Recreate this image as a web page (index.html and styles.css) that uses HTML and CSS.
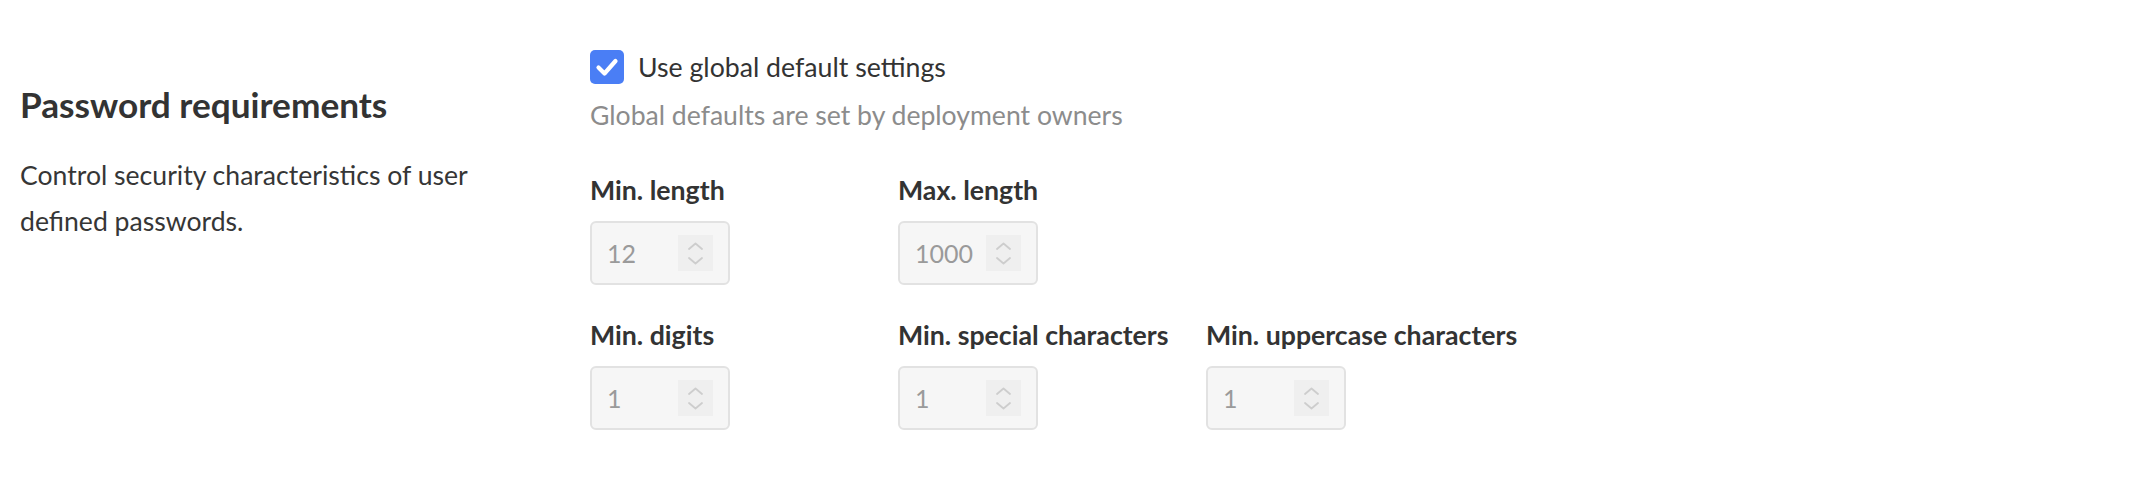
FILE: index.html
```html
<!DOCTYPE html>
<html lang="en">
<head>
<meta charset="utf-8">
<title>Password requirements</title>
<link rel="stylesheet" href="styles.css">
</head>
<body>
<section class="settings-section">
  <div class="section-info">
    <h2 class="section-title">Password requirements</h2>
    <p class="section-desc">Control security characteristics of user defined passwords.</p>
  </div>
  <div class="section-body">
    <label class="check-row">
      <span class="checkbox">
        <svg width="34" height="34" viewBox="0 0 34 34"><path d="M8.5 17.5 L14.5 23.5 L25.5 11" fill="none" stroke="#fff" stroke-width="4.2" stroke-linecap="round" stroke-linejoin="round"/></svg>
      </span>
      <span class="check-label">Use global default settings</span>
    </label>
    <p class="hint">Global defaults are set by deployment owners</p>
    <div class="fields">
      <div class="field">
        <div class="field-label">Min. length</div>
        <div class="num-input"><span class="num-value">12</span><span class="spinner"><svg width="35" height="36" viewBox="0 0 35 36"><path d="M11 14 L17.5 8.5 L24 14 M11 23 L17.5 28.5 L24 23" fill="none" stroke="#cdcdcd" stroke-width="1.8" stroke-linecap="round" stroke-linejoin="round"/></svg></span></div>
      </div>
      <div class="field">
        <div class="field-label">Max. length</div>
        <div class="num-input"><span class="num-value">1000</span><span class="spinner"><svg width="35" height="36" viewBox="0 0 35 36"><path d="M11 14 L17.5 8.5 L24 14 M11 23 L17.5 28.5 L24 23" fill="none" stroke="#cdcdcd" stroke-width="1.8" stroke-linecap="round" stroke-linejoin="round"/></svg></span></div>
      </div>
      <div class="field field-break">
        <div class="field-label">Min. digits</div>
        <div class="num-input"><span class="num-value">1</span><span class="spinner"><svg width="35" height="36" viewBox="0 0 35 36"><path d="M11 14 L17.5 8.5 L24 14 M11 23 L17.5 28.5 L24 23" fill="none" stroke="#cdcdcd" stroke-width="1.8" stroke-linecap="round" stroke-linejoin="round"/></svg></span></div>
      </div>
      <div class="field">
        <div class="field-label">Min. special characters</div>
        <div class="num-input"><span class="num-value">1</span><span class="spinner"><svg width="35" height="36" viewBox="0 0 35 36"><path d="M11 14 L17.5 8.5 L24 14 M11 23 L17.5 28.5 L24 23" fill="none" stroke="#cdcdcd" stroke-width="1.8" stroke-linecap="round" stroke-linejoin="round"/></svg></span></div>
      </div>
      <div class="field">
        <div class="field-label">Min. uppercase characters</div>
        <div class="num-input"><span class="num-value">1</span><span class="spinner"><svg width="35" height="36" viewBox="0 0 35 36"><path d="M11 14 L17.5 8.5 L24 14 M11 23 L17.5 28.5 L24 23" fill="none" stroke="#cdcdcd" stroke-width="1.8" stroke-linecap="round" stroke-linejoin="round"/></svg></span></div>
      </div>
    </div>
  </div>
</section>
</body>
</html>
```
FILE: styles.css
```css
html, body {
  margin: 0;
  padding: 0;
  background: #ffffff;
}

body {
  font-family: Lato, "Noto Sans", sans-serif;
  color: #333333;
}

.settings-section {
  display: flex;
  padding: 50px 0 0 20px;
}

.section-info {
  width: 570px;
  flex: none;
}

.section-title {
  margin: 36px 0 0 0;
  font-size: 35.2px;
  line-height: 36px;
  font-weight: 700;
  color: #333333;
}

.section-desc {
  margin: 30px 0 0 0;
  width: 500px;
  font-size: 26.6px;
  line-height: 46px;
  color: #363636;
}

.section-body {
  display: flex;
  flex-direction: column;
}

.check-row {
  display: flex;
  align-items: center;
  gap: 14px;
  height: 34px;
}

.checkbox {
  width: 34px;
  height: 34px;
  border-radius: 5px;
  background: #4a7ef5;
  display: flex;
}

.check-label {
  font-size: 26.7px;
  line-height: 30px;
  color: #333333;
}

.hint {
  margin: 16px 0 0 0;
  font-size: 26.6px;
  line-height: 30px;
  color: #8c8c8c;
}

.fields {
  display: grid;
  grid-template-columns: 308px 308px auto;
  row-gap: 35px;
  margin-top: 45px;
}

.field-break {
  grid-column: 1;
}

.field-label {
  font-size: 26.7px;
  line-height: 30px;
  font-weight: 700;
  color: #333333;
  white-space: nowrap;
}

.num-input {
  margin-top: 16px;
  box-sizing: border-box;
  width: 140px;
  height: 64px;
  border: 2px solid #e2e2e2;
  border-radius: 6px;
  background: #f6f6f6;
  display: flex;
  align-items: center;
  justify-content: space-between;
  padding: 0 15px 0 15px;
}

.num-value {
  font-size: 25px;
  color: #9a9a9a;
}

.spinner {
  width: 35px;
  height: 36px;
  background: #efefef;
  display: flex;
}
```
